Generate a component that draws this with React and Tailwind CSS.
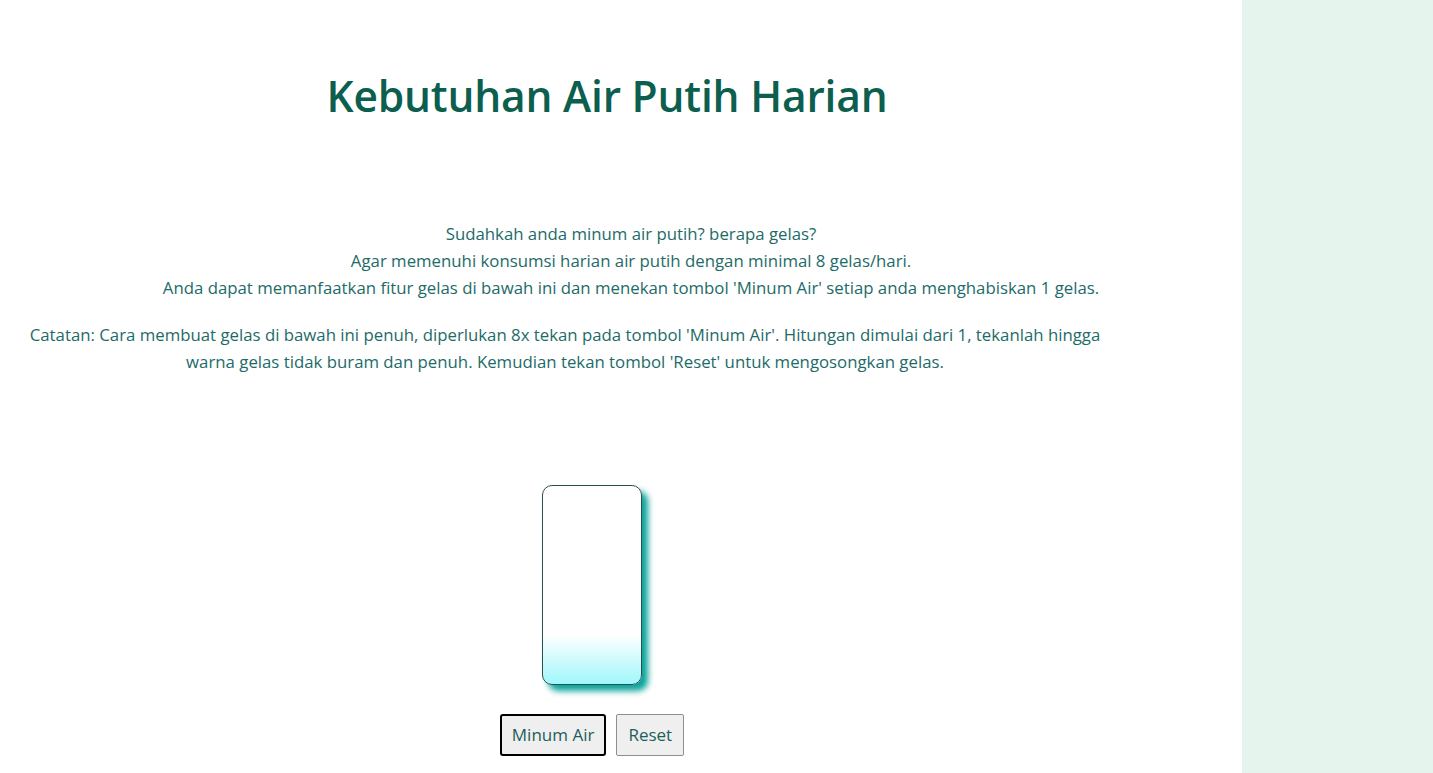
import { useState } from "react";

export default function App() {
  const [count, setCount] = useState(0);
  const level = Math.max(25, (count / 8) * 100);

  return (
    <div className="flex min-h-[773px] w-full bg-white font-['Open_Sans',sans-serif]">
      <main className="flex w-[1242px] flex-col">
        <h1 className="mt-[64px] text-center text-[42.5px] font-semibold tracking-[-0.2px] text-[#0c5e4e] pr-[28px]">
          Kebutuhan Air Putih Harian
        </h1>
        <div className="mt-[92px] text-center text-[16.8px] leading-[27px] text-[#1d6b68] pl-[20px]">
          <p>Sudahkah anda minum air putih? berapa gelas?</p>
          <p>Agar memenuhi konsumsi harian air putih dengan minimal 8 gelas/hari.</p>
          <p>Anda dapat memanfaatkan fitur gelas di bawah ini dan menekan tombol 'Minum Air' setiap anda menghabiskan 1 gelas.</p>
        </div>
        <p className="mt-[20px] ml-[20px] w-[1090px] text-center text-[16.8px] leading-[27px] text-[#1d6b68]">
          Catatan: Cara membuat gelas di bawah ini penuh, diperlukan 8x tekan pada tombol 'Minum Air'. Hitungan dimulai dari 1, tekanlah hingga warna gelas tidak buram dan penuh. Kemudian tekan tombol 'Reset' untuk mengosongkan gelas.
        </p>
        <div className="mt-[110px] flex flex-col items-center pr-[58px]">
          <div
            className="h-[200px] w-[100px] rounded-[10px] border border-[#2f4f4f] shadow-[6px_6px_6px_#08a39b]"
            style={{ background: `linear-gradient(to top, #9ff7fb 0%, #ffffff ${level}%)` }}
          />
          <div className="mt-[29px] flex gap-[10px]">
            <button
              onClick={() => setCount((c) => Math.min(8, c + 1))}
              className="h-[42px] rounded-[3px] border-2 border-black bg-[#efefef] px-[10px] text-[17px] text-[#1d5e5a]"
            >
              Minum Air
            </button>
            <button
              onClick={() => setCount(0)}
              className="h-[42px] rounded-[2px] border border-[#8f8f8f] bg-[#efefef] px-[11px] text-[17px] text-[#1d5e5a]"
            >
              Reset
            </button>
          </div>
        </div>
      </main>
      <aside className="flex-1 bg-[#e6f4ee]" />
    </div>
  );
}
